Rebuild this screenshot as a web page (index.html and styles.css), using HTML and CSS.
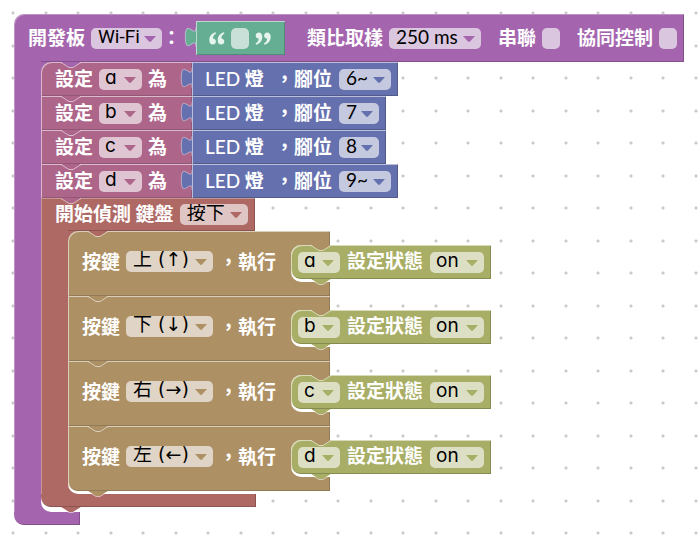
FILE: index.html
```html
<!DOCTYPE html>
<html lang="zh-Hant">
<head>
<meta charset="utf-8">
<title>Blocks</title>
<link rel="stylesheet" href="styles.css">
</head>
<body>
<svg class="defs" aria-hidden="true">
  <symbol id="notch" viewBox="0 0 20 6">
    <path d="M0 0L8 5H12L20 0Z" fill="currentColor"/>
    <path d="M0 .5L8 5.5H12L20 .5" fill="none" stroke="#fff" stroke-opacity=".55"/>
  </symbol>
  <symbol id="plug" viewBox="-9 0 9 15">
    <path d="M0 0C0 10 -8 -8 -8 7.500S0 5 0 15Z" fill="currentColor"/>
    <path d="M0 0C0 10 -8 -8 -8 7.500S0 5 0 15" fill="none" stroke="#fff" stroke-opacity=".4" stroke-width=".8"/>
  </symbol>
  <symbol id="arrow" viewBox="0 0 12 6"><path d="M0 0H12L7 5.500Q6 6.400 5 5.500Z" fill="currentColor"/></symbol>
  <symbol id="quote" viewBox="0 0 16 13">
    <path d="M6.500 .3C2.500 1.500 .3 4.500 .3 8.300C.3 11 1.600 12.600 3.700 12.600C5.600 12.600 6.900 11.300 6.900 9.500C6.900 7.700 5.700 6.500 4 6.400C3.800 4.500 4.900 2.700 7.100 1.500ZM14.900 .3C10.900 1.500 8.700 4.500 8.700 8.300C8.700 11 10 12.600 12.100 12.600C14 12.600 15.300 11.300 15.300 9.500C15.300 7.700 14.100 6.500 12.400 6.400C12.200 4.500 13.300 2.700 15.500 1.500Z" fill="#e6f4ee"/>
  </symbol>
</svg>

<main class="workspace">
  <section class="c-block purple">
    <header class="c-head board-head">
      <label for="board">開發板</label>
      <span class="pair">
        <span class="field w-board"><select id="board"><option>Wi-Fi</option></select><svg class="arrow"><use href="#arrow"/></svg></span>
        <span class="text">：</span>
      </span>
      <span class="value teal text-value">
        <svg class="plug"><use href="#plug"/></svg>
        <svg class="quote"><use href="#quote"/></svg>
        <input class="box" type="text" aria-label="文字">
        <svg class="quote close"><use href="#quote"/></svg>
      </span>
      <label for="sample">類比取樣</label>
      <span class="field w-sample"><select id="sample"><option>250 ms</option></select><svg class="arrow"><use href="#arrow"/></svg></span>
      <label class="spaced" for="serial">串聯</label>
      <input class="box" type="checkbox" id="serial">
      <label class="spaced" for="sync">協同控制</label>
      <input class="box" type="checkbox" id="sync">
    </header>

    <div class="c-body">
      <div class="stack">
        <svg class="notch"><use href="#notch"/></svg>

        <div class="row">
          <div class="set pink first">
            <label for="v1">設定</label>
            <span class="field w-var"><select id="v1" class="var"><option>a</option></select><svg class="arrow"><use href="#arrow"/></svg></span>
            <span class="text">為</span>
            <svg class="notch bottom"><use href="#notch"/></svg>
          </div>
          <div class="value blue">
            <svg class="plug"><use href="#plug"/></svg>
            <span class="text led"><span class="latin">LED</span> 燈</span>
            <label for="p1">，腳位</label>
            <span class="field w-pin-pwm"><select id="p1"><option>6~</option></select><svg class="arrow"><use href="#arrow"/></svg></span>
          </div>
        </div>

        <div class="row">
          <div class="set pink">
            <label for="v2">設定</label>
            <span class="field w-var"><select id="v2" class="var"><option>b</option></select><svg class="arrow"><use href="#arrow"/></svg></span>
            <span class="text">為</span>
            <svg class="notch bottom"><use href="#notch"/></svg>
          </div>
          <div class="value blue">
            <svg class="plug"><use href="#plug"/></svg>
            <span class="text led"><span class="latin">LED</span> 燈</span>
            <label for="p2">，腳位</label>
            <span class="field w-pin"><select id="p2"><option>7</option></select><svg class="arrow"><use href="#arrow"/></svg></span>
          </div>
        </div>

        <div class="row">
          <div class="set pink">
            <label for="v3">設定</label>
            <span class="field w-var"><select id="v3" class="var"><option>c</option></select><svg class="arrow"><use href="#arrow"/></svg></span>
            <span class="text">為</span>
            <svg class="notch bottom"><use href="#notch"/></svg>
          </div>
          <div class="value blue">
            <svg class="plug"><use href="#plug"/></svg>
            <span class="text led"><span class="latin">LED</span> 燈</span>
            <label for="p3">，腳位</label>
            <span class="field w-pin"><select id="p3"><option>8</option></select><svg class="arrow"><use href="#arrow"/></svg></span>
          </div>
        </div>

        <div class="row">
          <div class="set pink">
            <label for="v4">設定</label>
            <span class="field w-var"><select id="v4" class="var"><option>d</option></select><svg class="arrow"><use href="#arrow"/></svg></span>
            <span class="text">為</span>
            <svg class="notch bottom"><use href="#notch"/></svg>
          </div>
          <div class="value blue">
            <svg class="plug"><use href="#plug"/></svg>
            <span class="text led"><span class="latin">LED</span> 燈</span>
            <label for="p4">，腳位</label>
            <span class="field w-pin-pwm"><select id="p4"><option>9~</option></select><svg class="arrow"><use href="#arrow"/></svg></span>
          </div>
        </div>

        <section class="c-block red">
          <header class="c-head">
            <label for="event">開始偵測 鍵盤</label>
            <span class="field w-event"><select id="event"><option>按下</option></select><svg class="arrow"><use href="#arrow"/></svg></span>
          </header>
          <div class="c-body">
            <div class="stack">
              <svg class="notch"><use href="#notch"/></svg>

              <div class="key tan first">
                <label for="k1">按鍵</label>
                <span class="field w-key"><select id="k1"><option>上 (↑)</option></select><svg class="arrow"><use href="#arrow"/></svg></span>
                <span class="text">，執行</span>
                <div class="mouth">
                  <svg class="notch"><use href="#notch"/></svg>
                  <div class="state olive">
                    <span class="field w-var"><select id="s1" class="var" aria-label="a"><option>a</option></select><svg class="arrow"><use href="#arrow"/></svg></span>
                    <label for="o1">設定狀態</label>
                    <span class="field w-state"><select id="o1" class="var"><option>on</option></select><svg class="arrow"><use href="#arrow"/></svg></span>
                    <svg class="notch bottom"><use href="#notch"/></svg>
                  </div>
                </div>
                <svg class="notch bottom"><use href="#notch"/></svg>
              </div>

              <div class="key tan">
                <label for="k2">按鍵</label>
                <span class="field w-key"><select id="k2"><option>下 (↓)</option></select><svg class="arrow"><use href="#arrow"/></svg></span>
                <span class="text">，執行</span>
                <div class="mouth">
                  <svg class="notch"><use href="#notch"/></svg>
                  <div class="state olive">
                    <span class="field w-var"><select id="s2" class="var" aria-label="b"><option>b</option></select><svg class="arrow"><use href="#arrow"/></svg></span>
                    <label for="o2">設定狀態</label>
                    <span class="field w-state"><select id="o2" class="var"><option>on</option></select><svg class="arrow"><use href="#arrow"/></svg></span>
                    <svg class="notch bottom"><use href="#notch"/></svg>
                  </div>
                </div>
                <svg class="notch bottom"><use href="#notch"/></svg>
              </div>

              <div class="key tan">
                <label for="k3">按鍵</label>
                <span class="field w-key"><select id="k3"><option>右 (→)</option></select><svg class="arrow"><use href="#arrow"/></svg></span>
                <span class="text">，執行</span>
                <div class="mouth">
                  <svg class="notch"><use href="#notch"/></svg>
                  <div class="state olive">
                    <span class="field w-var"><select id="s3" class="var" aria-label="c"><option>c</option></select><svg class="arrow"><use href="#arrow"/></svg></span>
                    <label for="o3">設定狀態</label>
                    <span class="field w-state"><select id="o3" class="var"><option>on</option></select><svg class="arrow"><use href="#arrow"/></svg></span>
                    <svg class="notch bottom"><use href="#notch"/></svg>
                  </div>
                </div>
                <svg class="notch bottom"><use href="#notch"/></svg>
              </div>

              <div class="key tan last">
                <label for="k4">按鍵</label>
                <span class="field w-key"><select id="k4"><option>左 (←)</option></select><svg class="arrow"><use href="#arrow"/></svg></span>
                <span class="text">，執行</span>
                <div class="mouth">
                  <svg class="notch"><use href="#notch"/></svg>
                  <div class="state olive">
                    <span class="field w-var"><select id="s4" class="var" aria-label="d"><option>d</option></select><svg class="arrow"><use href="#arrow"/></svg></span>
                    <label for="o4">設定狀態</label>
                    <span class="field w-state"><select id="o4" class="var"><option>on</option></select><svg class="arrow"><use href="#arrow"/></svg></span>
                    <svg class="notch bottom"><use href="#notch"/></svg>
                  </div>
                </div>
                <svg class="notch bottom"><use href="#notch"/></svg>
              </div>
            </div>
          </div>
          <div class="c-foot"></div>
          <svg class="notch bottom"><use href="#notch"/></svg>
        </section>
      </div>
    </div>
    <div class="c-foot"></div>
  </section>
</main>
</body>
</html>
```

FILE: styles.css
```css
* {
  box-sizing: border-box;
}

body {
  margin: 0;
  background: #fff;
  color: #fff;
  font: 700 19px/21px Lato, "Noto Sans CJK TC", sans-serif;
  white-space: nowrap;
}

.defs {
  display: none;
}

.workspace {
  min-height: 100vh;
  padding: 14px;
  overflow: hidden;
  background-image:
    radial-gradient(circle at 13px 13px, #c9c9c9 1px, transparent 2px),
    radial-gradient(circle at 46px 13px, #c9c9c9 1px, transparent 2px),
    radial-gradient(circle at 13px 46px, #c9c9c9 1px, transparent 2px),
    radial-gradient(circle at 46px 46px, #c9c9c9 1px, transparent 2px);
  background-size: 65px 65px;
}

/* block colours */
.purple { --fill: #a465ae; --dark: #84508b; --pill: #dbc6df; }
.pink { --fill: #ae658a; --dark: #935675; --pill: #dfc5d2; }
.blue { --fill: #6571ae; --dark: #515a8b; --pill: #c5c9df; }
.teal { --fill: #65ae94; --dark: #518b76; --pill: #c8e0d8; }
.red { --fill: #ae6965; --dark: #8b5451; --pill: #dfc6c5; }
.tan { --fill: #ae9065; --dark: #937a56; --pill: #dfd4c5; }
.olive { --fill: #a8ae65; --dark: #868b51; --pill: #dddfc5; }

/* blocks that wrap a stack of others */
.c-block {
  position: relative;
  width: fit-content;
}

.c-head {
  display: flex;
  align-items: center;
  gap: 6px;
  width: fit-content;
  height: 33px;
  padding: 0 7px 0 14px;
  background: linear-gradient(var(--dark), var(--dark)) 27px 100% / 100% 1px no-repeat var(--fill);
  box-shadow: inset 1px 1px rgb(255 255 255 / 30%), inset -1px 0 var(--dark);
}

.board-head {
  height: 48px;
  border-radius: 10px 0 0 0;
}

.c-body {
  width: fit-content;
  padding-left: 27px;
  background: linear-gradient(var(--fill), var(--fill)) 0 0 / 40px 100% no-repeat;
  box-shadow: inset 1px 0 rgb(255 255 255 / 30%);
}

.stack {
  position: relative;
  padding-bottom: 5px;
  border-radius: 10px 0 0 10px;
  background: linear-gradient(#fff, #fff) 0 100% / 13px 40px no-repeat;
}

.red .stack {
  padding-bottom: 3px;
}

.c-foot {
  width: 66px;
  height: 13px;
  border-radius: 0 0 0 10px;
  background: var(--fill);
  box-shadow: inset -1px -1px var(--dark);
}

.red .c-foot {
  width: 215px;
}

/* stacked rows */
.row {
  display: flex;
}

.set,
.value,
.state {
  position: relative;
  display: flex;
  align-items: center;
  gap: 7px;
  height: 34px;
  background: var(--fill);
  box-shadow: inset 1px 1px rgb(255 255 255 / 55%), inset -1px -1px var(--dark);
}

.set {
  gap: 6px;
  width: 151px;
  padding-left: 14px;
}

.first {
  border-radius: 10px 0 0 0;
}

.value {
  padding: 0 7px 0 13px;
}

.led {
  width: 63px;
}

.latin {
  font-weight: 500;
}

.key {
  position: relative;
  display: flex;
  gap: 6px;
  width: 262px;
  height: 65px;
  padding: 14px 0 0 14px;
  line-height: 34px;
  background: var(--fill);
  box-shadow: inset 1px 1px rgb(255 255 255 / 55%), inset -1px -1px var(--dark);
}

.key > .field {
  margin-top: 6px;
}

.last {
  border-radius: 0 0 0 10px;
}

.mouth {
  position: relative;
  width: 39px;
  height: 37px;
  margin-left: 9px;
  border-radius: 10px 0 0 10px;
  background: #fff;
}

.state {
  width: fit-content;
  padding: 0 7px;
  border-radius: 10px 0 0 10px;
}

.text-value {
  gap: 6px;
  margin: 0 16px 0 9px;
  padding: 0 14px 0 13px;
}

.pair {
  display: flex;
  align-items: center;
}

label,
.text {
  padding-bottom: 2px;
}

.spaced {
  margin-left: 11px;
}

/* connectors */
.notch {
  position: absolute;
  z-index: 1;
  top: 0;
  left: 20px;
  width: 20px;
  height: 6px;
  color: var(--fill);
}

.notch.bottom {
  top: 100%;
}

.plug {
  position: absolute;
  top: 6px;
  right: 100%;
  width: 12px;
  height: 20px;
  color: var(--fill);
}

.quote {
  width: 16px;
  height: 13px;
}

.quote.close {
  transform: rotate(180deg);
}

/* fields */
.field {
  position: relative;
  height: 21px;
  line-height: 21px;
}

select {
  display: block;
  width: 100%;
  height: 21px;
  margin: 0;
  padding: 0 0 4px 7px;
  border: 0;
  border-radius: 5px;
  appearance: none;
  background: var(--pill);
  color: #000;
  font: 400 19px/17px Lato, "Noto Sans CJK TC", sans-serif;
}

.var {
  padding-left: 6px;
  font-family: Inter, sans-serif;
  font-feature-settings: "cv11";
}

.arrow {
  position: absolute;
  top: 8px;
  right: 6px;
  width: 12px;
  height: 6px;
  color: var(--fill);
  pointer-events: none;
}

.box {
  width: 18px;
  height: 21px;
  margin: 0;
  padding: 0;
  border: 0;
  border-radius: 5px;
  appearance: none;
  background: var(--pill);
}

.w-board { width: 71px; }
.w-sample { width: 92px; }
.w-var { width: 43px; }
.w-pin { width: 40px; }
.w-pin-pwm { width: 52px; }
.w-event { width: 68px; }
.w-key { width: 87px; }
.w-state { width: 54px; }

.state .w-var {
  width: 42px;
}

.w-board select {
  font-family: Roboto, sans-serif;
}

.w-key select {
  font-family: "DejaVu Sans", "Noto Sans CJK TC", sans-serif;
}
```
